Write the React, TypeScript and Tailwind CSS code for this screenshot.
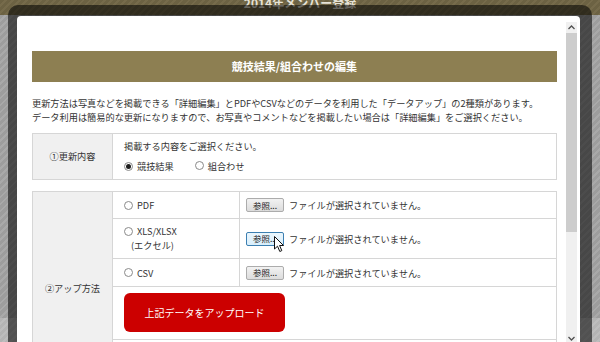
import React from "react";

function Radio({ checked }: { checked?: boolean }) {
  return (
    <span className="inline-flex h-[9px] w-[9px] shrink-0 items-center justify-center rounded-full border border-[#8a8a8a] bg-white">
      {checked && <span className="h-[5px] w-[5px] rounded-full bg-[#1e1e1e]" />}
    </span>
  );
}

function FileInput({ hover }: { hover?: boolean }) {
  return (
    <div className="flex items-center gap-[5px]">
      <span
        className={
          hover
            ? "flex h-[14px] w-[38px] items-center justify-center rounded-[2px] border border-[#3c7fb1] bg-gradient-to-b from-[#eaf6fd] to-[#d9effc] text-[8.5px] leading-none text-[#222]"
            : "flex h-[14px] w-[38px] items-center justify-center rounded-[2px] border border-[#acacac] bg-gradient-to-b from-[#f2f2f2] to-[#dcdcdc] text-[8.5px] leading-none text-[#222]"
        }
      >
        参照...
      </span>
      <span>ファイルが選択されていません。</span>
    </div>
  );
}

export default function App() {
  return (
    <div className="relative flex h-[342px] w-[600px] flex-col overflow-hidden font-['Noto_Sans_CJK_JP',sans-serif] text-[9.2px] text-[#333]">
      {/* page behind the modal */}
      <div className="flex h-[15px] justify-center bg-[repeating-linear-gradient(135deg,#6c6243_0px,#6c6243_3px,#766b4b_3px,#766b4b_5px)]">
        <span className="-mt-[5px] text-[12px] font-bold leading-[16px] text-[#e6e2d6]">2014年メンバー登録</span>
      </div>
      <div className="h-[303px] bg-[repeating-linear-gradient(135deg,#9d9d9d_0px,#9d9d9d_3px,#a9a9a9_3px,#a9a9a9_5px)]" />
      <div className="flex-1 bg-[repeating-linear-gradient(135deg,#b4b4b4_0px,#b4b4b4_3px,#bdbdbd_3px,#bdbdbd_5px)]" />

      {/* modal */}
      <div className="absolute left-[8px] top-[5px] h-[370px] w-[584px] rounded-[10px] bg-[rgba(0,0,0,0.55)] pb-[9px] pl-[9px] pr-[12px] pt-[11px]">
        <div className="flex h-full rounded-[4px] bg-white">
          <div className="w-[540px] pl-[15px] pt-[35px]">
            <div className="flex h-[31px] items-center justify-center bg-[#8d7f52] text-[11px] font-bold text-white">
              競技結果/組合わせの編集
            </div>

            <div className="mt-[14px] leading-[14px]">
              <p>更新方法は写真などを掲載できる「詳細編集」とPDFやCSVなどのデータを利用した「データアップ」の2種類があります。</p>
              <p>データ利用は簡易的な更新になりますので、お写真やコメントなどを掲載したい場合は「詳細編集」をご選択ください。</p>
            </div>

            {/* ① update content */}
            <div className="mt-[9px] grid h-[47px] grid-cols-[79px_1fr] gap-px bg-[#d6d6d6] p-px">
              <div className="flex items-center justify-center bg-[#f0f0f0]">①更新内容</div>
              <div className="bg-white pl-[11px] pt-[5px] leading-[14px]">
                <p>掲載する内容をご選択ください。</p>
                <div className="mt-[6px] flex items-center">
                  <Radio checked />
                  <span className="ml-[4px]">競技結果</span>
                  <span className="ml-[21px]">
                    <Radio />
                  </span>
                  <span className="ml-[4px]">組合わせ</span>
                </div>
              </div>
            </div>

            {/* ② upload method */}
            <div className="mt-[11px] grid grid-cols-[79px_126px_1fr] grid-rows-[26px_39px_27px_52px_44px] gap-px bg-[#d6d6d6] p-px leading-[14px]">
              <div className="row-span-5 flex items-center justify-center bg-[#f0f0f0]">②アップ方法</div>

              <div className="flex items-center gap-[4px] bg-white pl-[11px]">
                <Radio />
                <span>PDF</span>
              </div>
              <div className="flex items-center bg-white pl-[6px]">
                <FileInput />
              </div>

              <div className="bg-white pl-[11px] pt-[5px]">
                <div className="flex items-center gap-[4px]">
                  <Radio />
                  <span>XLS/XLSX</span>
                </div>
                <div className="pl-[7px]">(エクセル)</div>
              </div>
              <div className="flex items-center bg-white pl-[6px]">
                <FileInput hover />
              </div>

              <div className="flex items-center gap-[4px] bg-white pl-[11px]">
                <Radio />
                <span>CSV</span>
              </div>
              <div className="flex items-center bg-white pl-[6px]">
                <FileInput />
              </div>

              <div className="col-span-2 bg-white pl-[11px] pt-[6px]">
                <button className="flex h-[39px] w-[161px] items-center justify-center rounded-[6px] bg-[#cc0000] text-[10px] text-white">
                  上記データをアップロード
                </button>
              </div>

              <div className="col-span-2 bg-white" />
            </div>
          </div>

          {/* scrollbar */}
          <div className="ml-[9px] mt-[6px] flex h-[322px] w-[11px] flex-col bg-[#f0f0f0]">
            <div className="flex h-[11px] items-center justify-center">
              <svg width="7" height="5" viewBox="0 0 7 5">
                <path d="M0.5 4 L3.5 1 L6.5 4" fill="none" stroke="#505050" strokeWidth="1.3" />
              </svg>
            </div>
            <div className="h-[199px] bg-[#cdcdcd]" />
            <div className="flex-1" />
            <div className="flex h-[11px] items-center justify-center">
              <svg width="7" height="5" viewBox="0 0 7 5">
                <path d="M0.5 1 L3.5 4 L6.5 1" fill="none" stroke="#505050" strokeWidth="1.3" />
              </svg>
            </div>
          </div>
        </div>
      </div>

      {/* mouse pointer */}
      <svg className="absolute left-[274px] top-[236px]" width="11" height="17" viewBox="0 0 11 17">
        <path
          d="M0.5 0.5 L0.5 13 L3.5 10.2 L5.8 15.5 L7.8 14.6 L5.6 9.5 L9.5 9.5 Z"
          fill="white"
          stroke="#111"
          strokeWidth="1"
          strokeLinejoin="round"
        />
      </svg>
    </div>
  );
}
